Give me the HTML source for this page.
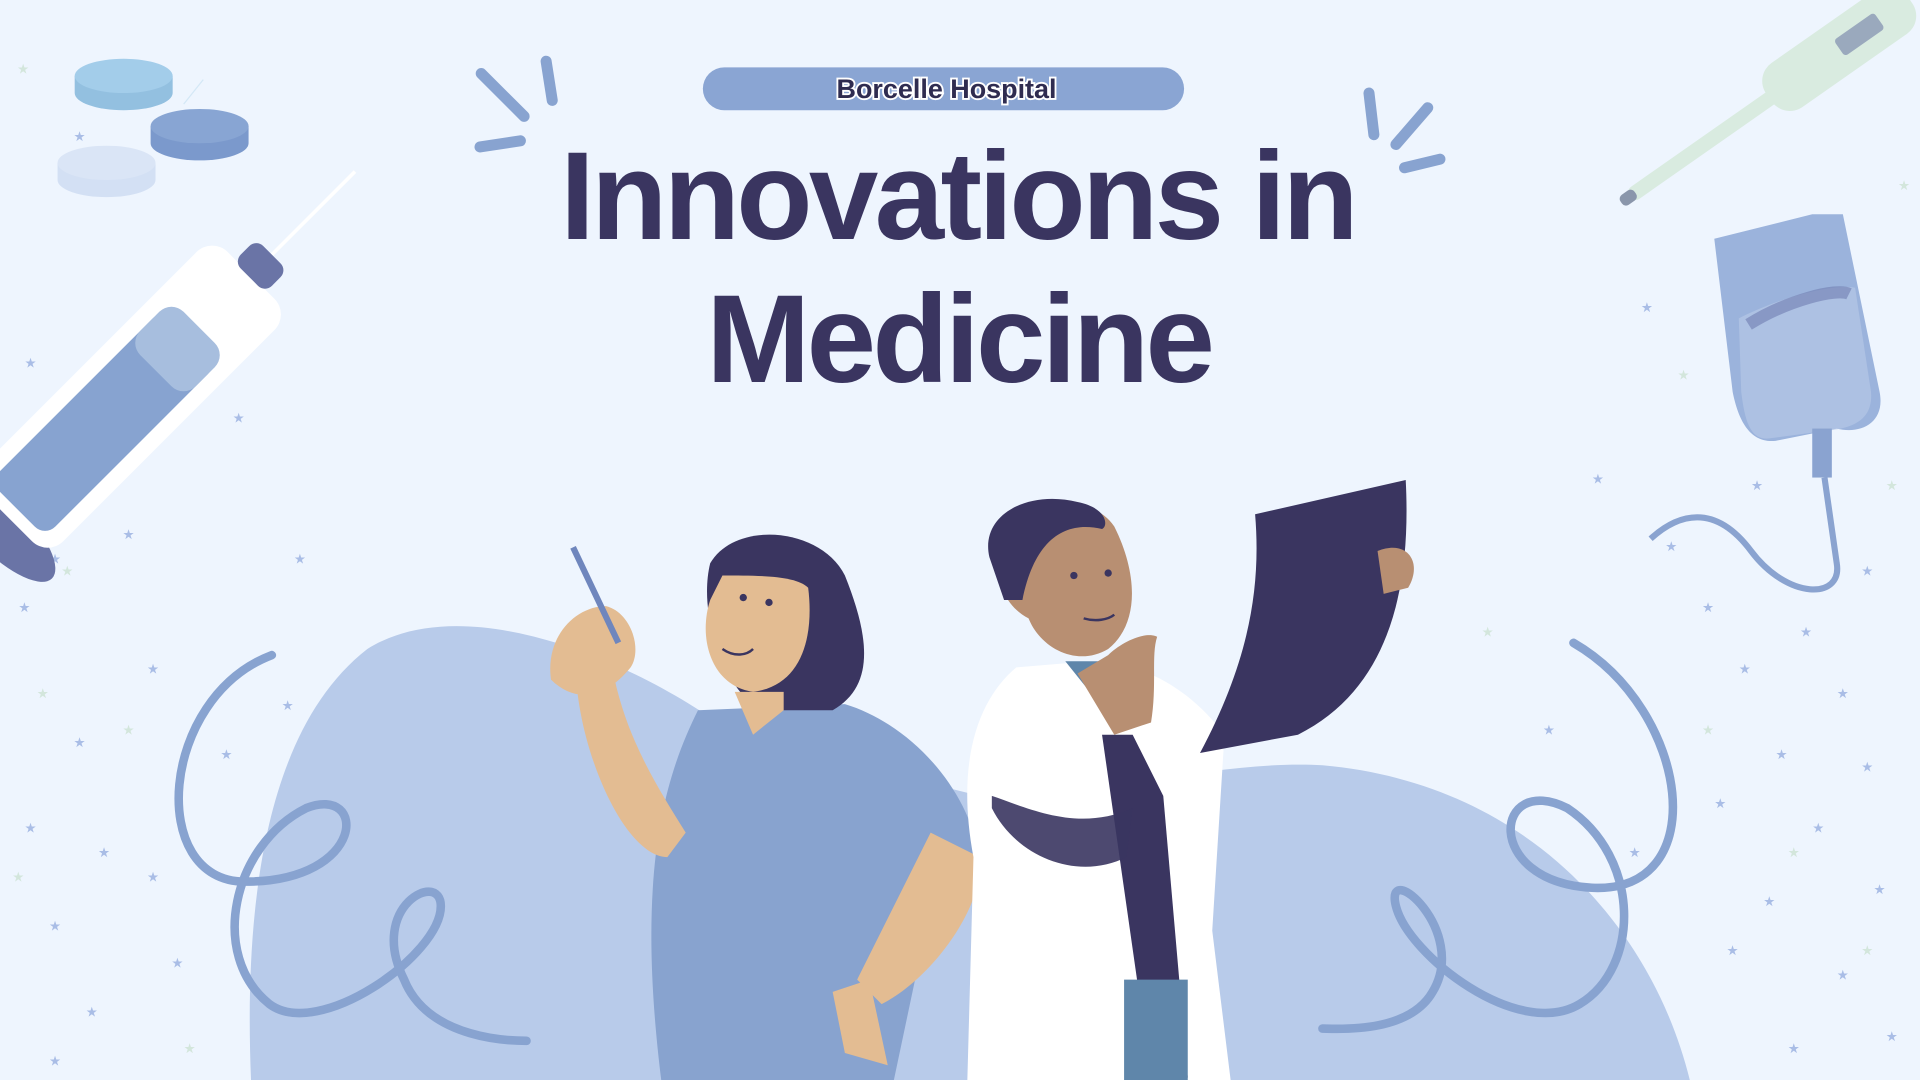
<!DOCTYPE html>
<html><head><meta charset="utf-8"><style>
html,body{margin:0;padding:0;background:#eef5fe;overflow:hidden}
svg{display:block}
</style></head><body>
<svg width="1920" height="1080" viewBox="0 0 1568 882" xmlns="http://www.w3.org/2000/svg">
<rect width="1568" height="882" fill="#eef5fe"/>
<!-- stars -->
<g fill="#a9bde6" font-family="DejaVu Sans" font-size="11">
<text x="60" y="115">★</text><text x="40" y="460">★</text><text x="100" y="440">★</text><text x="15" y="500">★</text><text x="120" y="550">★</text><text x="60" y="610">★</text><text x="20" y="680">★</text><text x="80" y="700">★</text><text x="40" y="760">★</text><text x="140" y="790">★</text><text x="70" y="830">★</text><text x="190" y="345">★</text><text x="240" y="460">★</text><text x="230" y="580">★</text><text x="20" y="300">★</text><text x="50" y="340">★</text><text x="120" y="720">★</text><text x="180" y="620">★</text><text x="40" y="870">★</text>
<text x="1340" y="255">★</text><text x="1300" y="395">★</text><text x="1360" y="450">★</text><text x="1390" y="500">★</text><text x="1420" y="550">★</text><text x="1470" y="520">★</text><text x="1520" y="470">★</text><text x="1500" y="570">★</text><text x="1450" y="620">★</text><text x="1400" y="660">★</text><text x="1480" y="680">★</text><text x="1530" y="730">★</text><text x="1440" y="740">★</text><text x="1410" y="780">★</text><text x="1500" y="800">★</text><text x="1540" y="850">★</text><text x="1460" y="860">★</text><text x="1260" y="600">★</text><text x="1330" y="700">★</text><text x="1520" y="630">★</text><text x="1430" y="400">★</text>
</g>
<g fill="#d3e6dc" font-family="DejaVu Sans" font-size="11">
<text x="14" y="60">★</text><text x="50" y="470">★</text><text x="30" y="570">★</text><text x="100" y="600">★</text><text x="10" y="720">★</text><text x="150" y="860">★</text><text x="1550" y="155">★</text><text x="1370" y="310">★</text><text x="1540" y="400">★</text><text x="1390" y="600">★</text><text x="1460" y="700">★</text><text x="1520" y="780">★</text><text x="1210" y="520">★</text>
</g>
<!-- blobs -->
<path d="M205 882 C200 760 210 600 300 530 C380 480 520 540 600 600 L800 650 L800 882 Z" fill="#b8cbea"/>
<path d="M780 650 C900 650 1000 620 1080 625 C1250 640 1350 760 1380 882 L780 882 Z" fill="#b8cbea"/>
<!-- pills -->
<g>
<path d="M61 62 v14 a40 14 0 0 0 80 0 v-14" fill="#93c0e0"/><ellipse cx="101" cy="62" rx="40" ry="14" fill="#a3cdea"/>
<path d="M150 85 l16 -20" stroke="#d4e8f6" stroke-width="1"/>
<path d="M123 103 v14 a40 14 0 0 0 80 0 v-14" fill="#7b99cc"/><ellipse cx="163" cy="103" rx="40" ry="14" fill="#88a5d3"/>
<path d="M47 133 v14 a40 14 0 0 0 80 0 v-14" fill="#d3e0f4"/><ellipse cx="87" cy="133" rx="40" ry="14" fill="#dae5f6"/>
</g>
<!-- left syringe -->
<g transform="translate(0,430) rotate(-45)">
<line x1="300" y1="0" x2="410" y2="0" stroke="#fff" stroke-width="3"/>
<ellipse cx="0" cy="0" rx="22" ry="60" fill="#6a74a6"/>
<rect x="10" y="-45" width="280" height="90" rx="18" fill="#fff"/>
<rect x="20" y="-32" width="200" height="64" rx="12" fill="#87a3d0"/>
<rect x="180" y="-32" width="50" height="64" rx="14" fill="#a7bede"/>
<rect x="288" y="-18" width="26" height="36" rx="8" fill="#6a74a6"/>
</g>
<!-- thermometer -->
<g transform="translate(1330,160) rotate(-35)">
<rect x="0" y="-5" width="280" height="12" rx="6" fill="#d9ebe0"/>
<rect x="140" y="-22" width="140" height="44" rx="18" fill="#d9ebe0"/>
<rect x="210" y="-8" width="40" height="16" rx="3" fill="#9aa9bd"/>
<rect x="-8" y="-4" width="14" height="10" rx="4" fill="#8a96ab"/>
</g>
<!-- IV bag -->
<g>
<path d="M1400 195 L1480 175 L1505 175 L1535 320 C1540 345 1520 355 1500 350 L1450 360 C1430 362 1420 345 1415 320 Z" fill="#9bb3dc"/>
<path d="M1420 260 C1460 240 1500 232 1515 235 L1528 320 C1530 345 1510 350 1490 352 L1445 358 C1430 360 1425 345 1422 320 Z" fill="#b9c9e8" opacity=".6"/>
<path d="M1428 265 C1460 245 1500 235 1510 240" stroke="#6f7db0" stroke-width="10" fill="none" opacity=".6"/>
<rect x="1480" y="350" width="16" height="40" fill="#8aa3d0"/>
<path d="M1490 390 L1500 460 C1505 490 1460 490 1430 450 C1400 410 1370 420 1348 440" stroke="#8aa3d0" stroke-width="5" fill="none"/>
</g>
<!-- swirls -->
<path d="M222 535 C130 570 120 720 200 720 C300 720 300 640 250 660 C190 690 170 780 220 820 C260 850 360 780 360 740 C360 710 300 740 330 800 C350 850 420 850 430 850" stroke="#88a3d0" stroke-width="7" fill="none" stroke-linecap="round"/>
<path d="M1285 525 C1380 580 1400 730 1300 725 C1210 720 1220 630 1280 660 C1340 700 1340 790 1290 820 C1240 850 1150 780 1140 740 C1130 700 1200 760 1170 810 C1150 845 1090 840 1080 840" stroke="#88a3d0" stroke-width="7" fill="none" stroke-linecap="round"/>
<!-- nurse -->
<g>
<path d="M570 580 C540 640 520 720 540 882 L730 882 L760 740 L800 700 C790 640 740 590 690 575 Z" fill="#88a3cf"/>
<path d="M470 540 C470 610 510 700 545 700 L560 680 C535 640 510 600 500 545 Z" fill="#e3bc92"/>
<path d="M450 555 C445 520 470 495 495 495 C515 500 525 530 515 545 C495 570 470 575 450 555 Z" fill="#e3bc92"/>
<line x1="468" y1="447" x2="505" y2="525" stroke="#6f86bd" stroke-width="5"/>
<path d="M760 680 L800 700 C805 740 760 800 720 820 L700 800 Z" fill="#e3bc92"/>
<path d="M680 810 L710 800 L725 870 L690 860 Z" fill="#e3bc92"/>
<path d="M580 460 C600 425 670 430 690 470 C710 520 715 560 680 580 L620 580 C590 560 570 500 580 460 Z" fill="#3a3560"/>
<path d="M590 470 C620 470 650 470 660 480 C665 520 655 560 615 565 C580 560 570 520 580 490 Z" fill="#e3bc92"/>
<path d="M600 565 L615 600 L640 580 L640 565 Z" fill="#e3bc92"/>
<circle cx="607" cy="488" r="3" fill="#3a3560"/><circle cx="628" cy="492" r="3" fill="#3a3560"/>
<path d="M590 530 C600 537 610 535 615 530" stroke="#3a3560" stroke-width="2" fill="none"/>
</g>
<!-- doctor -->
<g>
<path d="M830 545 C800 570 780 620 795 700 L790 882 L1005 882 L990 760 L1000 600 C970 560 930 540 890 540 Z" fill="#fff"/>
<path d="M870 540 L910 590 L930 560 L900 540 Z" fill="#5f86aa"/>
<path d="M900 600 L940 880 L970 880 L950 650 L925 600 Z" fill="#3a3560"/>
<path d="M918 800 L970 800 L970 882 L918 882 Z" fill="#5f86aa"/>
<path d="M810 660 C830 700 880 720 920 700 L925 660 C880 680 840 660 810 650 Z" fill="#3a3560" opacity=".9"/>
<path d="M880 550 L910 600 L940 590 C945 560 940 535 945 520 C935 515 915 525 905 535 Z" fill="#b88f72"/>
<path d="M1025 420 L1148 392 C1152 470 1140 560 1060 600 L980 615 C1020 540 1030 480 1025 420 Z" fill="#3a3560"/>
<path d="M1125 450 C1150 440 1162 460 1150 480 L1130 485 Z" fill="#b88f72"/>
<path d="M815 440 C830 405 890 400 910 430 C930 470 930 510 905 530 C880 545 850 530 840 505 C820 495 810 470 815 440 Z" fill="#b88f72"/>
<path d="M808 455 C800 420 840 400 880 410 C905 415 905 430 900 432 C870 425 845 440 835 490 L820 490 Z" fill="#3a3560"/>
<circle cx="877" cy="470" r="3" fill="#3a3560"/><circle cx="905" cy="468" r="3" fill="#3a3560"/>
<path d="M885 505 C895 508 905 506 910 502" stroke="#3a3560" stroke-width="2" fill="none"/>
</g>
<!-- title -->
<rect x="574" y="55" width="393" height="35" rx="17.5" fill="#8aa5d3"/>
<text x="773" y="80" text-anchor="middle" font-family="Liberation Sans, sans-serif" font-weight="bold" font-size="22" fill="#2f2c50" stroke="#fff" stroke-width="3" paint-order="stroke">Borcelle Hospital</text>
<g fill="#3a3560" font-family="Liberation Sans, sans-serif" font-weight="bold" text-anchor="middle">
<text x="782" y="195" font-size="102" letter-spacing="-3">Innovations in</text>
<text x="783" y="312" font-size="102" letter-spacing="-3">Medicine</text>
</g>
<g stroke="#88a3d0" stroke-width="9" stroke-linecap="round">
<line x1="393" y1="60" x2="428" y2="95"/><line x1="446" y1="50" x2="451" y2="82"/><line x1="392" y1="120" x2="425" y2="115"/>
<line x1="1118" y1="76" x2="1122" y2="110"/><line x1="1166" y1="88" x2="1140" y2="118"/><line x1="1147" y1="137" x2="1176" y2="130"/>
</g>
</svg>
</body></html>
